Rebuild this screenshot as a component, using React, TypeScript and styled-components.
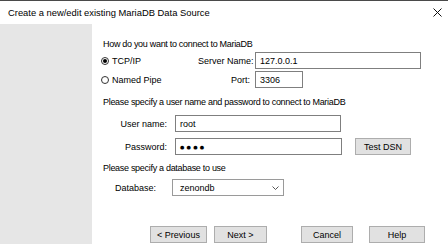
import * as React from "react";
import styled, { createGlobalStyle } from "styled-components";

const Global = createGlobalStyle`
  html, body { margin: 0; padding: 0; background: #fff; }
  body {
    font-family: "Liberation Sans", Arial, sans-serif;
    font-size: 9px;
    color: #000;
  }
`;

const Window = styled.div`
  width: 448px;
  height: 244px;
  display: flex;
  flex-direction: column;
  border-top: 1px solid #4a4a4a;
  box-sizing: border-box;
  overflow: hidden;
`;

const TitleBar = styled.div`
  height: 23px;
  display: flex;
  align-items: center;
  justify-content: space-between;
  padding: 0 6px 0 8px;
  font-size: 9.4px;
`;

const Body = styled.div`
  flex: 1;
  display: flex;
`;

const SidePanel = styled.div`
  width: 92px;
  background: #e6e6e6;
`;

const Content = styled.div`
  flex: 1;
  display: flex;
  flex-direction: column;
  padding: 14px 0 1px 11px;
`;

const Heading = styled.div<{ $top?: number }>`
  line-height: 12px;
  height: 12px;
  letter-spacing: -0.3px;
  white-space: nowrap;
  margin-top: ${(p) => p.$top ?? 0}px;
`;

const ConnectGrid = styled.div`
  display: grid;
  grid-template-columns: 90px 52px auto;
  justify-content: start;
  grid-auto-rows: 17px;
  row-gap: 2px;
  column-gap: 5px;
  margin-top: 2px;
  align-items: center;
`;

const RadioLabel = styled.label`
  display: flex;
  align-items: center;
  gap: 3px;
  margin-left: -2px;
  white-space: nowrap;
`;

const RadioDot = styled.span<{ $checked?: boolean }>`
  width: 8px;
  height: 8px;
  border: 1px solid #333;
  border-radius: 50%;
  box-sizing: border-box;
  display: flex;
  align-items: center;
  justify-content: center;
  &::after {
    content: "";
    width: 4px;
    height: 4px;
    border-radius: 50%;
    background: ${(p) => (p.$checked ? "#000" : "transparent")};
  }
`;

const FieldLabel = styled.span`
  text-align: right;
  white-space: nowrap;
`;

const TextBox = styled.div<{ $w: number }>`
  width: ${(p) => p.$w}px;
  height: 17px;
  box-sizing: border-box;
  border: 1px solid #7f7f7f;
  padding: 0 4px;
  display: flex;
  align-items: center;
  background: #fff;
`;

const CredRow = styled.div<{ $top: number }>`
  display: grid;
  grid-template-columns: 64px auto auto;
  justify-content: start;
  column-gap: 8px;
  align-items: center;
  margin-top: ${(p) => p.$top}px;
`;

const DbRow = styled.div`
  display: grid;
  grid-template-columns: 57px auto;
  justify-content: start;
  align-items: center;
  margin-top: 5px;
  padding-left: 12px;
`;

const Dots = styled.span`
  font-family: "DejaVu Sans", sans-serif;
  font-size: 5px;
  letter-spacing: 2.2px;
`;

const Select = styled.div`
  width: 112px;
  height: 17px;
  box-sizing: border-box;
  border: 1px solid #9a9a9a;
  padding: 0 4px 0 7px;
  display: flex;
  align-items: center;
  justify-content: space-between;
`;

const Button = styled.div<{ $w: number; $ml?: number }>`
  width: ${(p) => p.$w}px;
  height: 17px;
  margin-left: ${(p) => p.$ml ?? 0}px;
  box-sizing: border-box;
  background: #e1e1e1;
  border: 1px solid #adadad;
  display: flex;
  align-items: center;
  justify-content: center;
  white-space: nowrap;
`;

const ButtonBar = styled.div`
  margin-top: auto;
  display: flex;
  justify-content: flex-end;
  padding-right: 23px;
`;

export default function App() {
  return (
    <>
      <Global />
      <Window>
        <TitleBar>
          <span>Create a new/edit existing MariaDB Data Source</span>
          <svg width="9" height="9" viewBox="0 0 9 9">
            <path d="M0.5 0.5 L8.5 8.5 M8.5 0.5 L0.5 8.5" stroke="#111" strokeWidth="1" />
          </svg>
        </TitleBar>
        <Body>
          <SidePanel />
          <Content>
            <Heading>How do you want to connect to MariaDB</Heading>
            <ConnectGrid>
              <RadioLabel>
                <RadioDot $checked />
                TCP/IP
              </RadioLabel>
              <FieldLabel>Server Name:</FieldLabel>
              <TextBox $w={166}>127.0.0.1</TextBox>
              <RadioLabel>
                <RadioDot />
                Named Pipe
              </RadioLabel>
              <FieldLabel>Port:</FieldLabel>
              <TextBox $w={48}>3306</TextBox>
            </ConnectGrid>
            <Heading $top={8}>Please specify a user name and password to connect to MariaDB</Heading>
            <CredRow $top={7}>
              <FieldLabel>User name:</FieldLabel>
              <TextBox $w={166}>root</TextBox>
            </CredRow>
            <CredRow $top={6}>
              <FieldLabel>Password:</FieldLabel>
              <TextBox $w={167}>
                <Dots>●●●●</Dots>
              </TextBox>
              <Button $w={56} $ml={5}>Test DSN</Button>
            </CredRow>
            <Heading $top={7}>Please specify a database to use</Heading>
            <DbRow>
              <span>Database:</span>
              <Select>
                zenondb
                <svg width="7" height="4" viewBox="0 0 7 4">
                  <path d="M0.5 0.5 L3.5 3.5 L6.5 0.5" stroke="#444" strokeWidth="0.9" fill="none" />
                </svg>
              </Select>
            </DbRow>
            <ButtonBar>
              <Button $w={57}>&lt; Previous</Button>
              <Button $w={53} $ml={7}>Next &gt;</Button>
              <Button $w={52} $ml={34}>Cancel</Button>
              <Button $w={56} $ml={16}>Help</Button>
            </ButtonBar>
          </Content>
        </Body>
      </Window>
    </>
  );
}
